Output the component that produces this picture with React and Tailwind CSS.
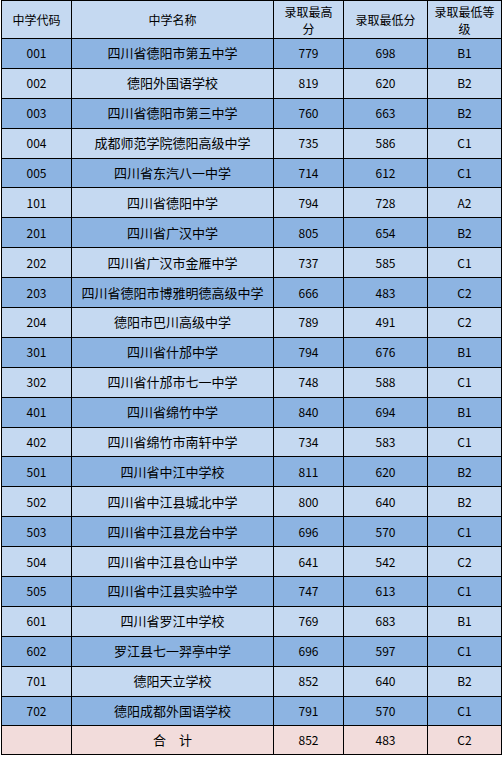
import React from "react";

const rows = [
  ["001", "四川省德阳市第五中学", "779", "698", "B1"],
  ["002", "德阳外国语学校", "819", "620", "B2"],
  ["003", "四川省德阳市第三中学", "760", "663", "B2"],
  ["004", "成都师范学院德阳高级中学", "735", "586", "C1"],
  ["005", "四川省东汽八一中学", "714", "612", "C1"],
  ["101", "四川省德阳中学", "794", "728", "A2"],
  ["201", "四川省广汉中学", "805", "654", "B2"],
  ["202", "四川省广汉市金雁中学", "737", "585", "C1"],
  ["203", "四川省德阳市博雅明德高级中学", "666", "483", "C2"],
  ["204", "德阳市巴川高级中学", "789", "491", "C2"],
  ["301", "四川省什邡中学", "794", "676", "B1"],
  ["302", "四川省什邡市七一中学", "748", "588", "C1"],
  ["401", "四川省绵竹中学", "840", "694", "B1"],
  ["402", "四川省绵竹市南轩中学", "734", "583", "C1"],
  ["501", "四川省中江中学校", "811", "620", "B2"],
  ["502", "四川省中江县城北中学", "800", "640", "B2"],
  ["503", "四川省中江县龙台中学", "696", "570", "C1"],
  ["504", "四川省中江县仓山中学", "641", "542", "C2"],
  ["505", "四川省中江县实验中学", "747", "613", "C1"],
  ["601", "四川省罗江中学校", "769", "683", "B1"],
  ["602", "罗江县七一羿亭中学", "696", "597", "C1"],
  ["701", "德阳天立学校", "852", "640", "B2"],
  ["702", "德阳成都外国语学校", "791", "570", "C1"],
];

// column widths incl. right border: 70 / 202 / 70 / 84 / 74
const grid = "grid grid-cols-[70px_202px_70px_84px_74px] border-b border-black";
const cell = "flex items-center justify-center text-center border-r border-black";

function Row({ data, bg, h }) {
  return (
    <div className={`${grid} ${bg} ${h} text-[12px]`}>
      <div className={cell}>{data[0]}</div>
      <div className={`${cell} text-[13px] whitespace-nowrap`}>{data[1]}</div>
      <div className={cell}>{data[2]}</div>
      <div className={cell}>{data[3]}</div>
      <div className={cell}>{data[4]}</div>
    </div>
  );
}

function App() {
  return (
    <div className="bg-white w-[503px] h-[758px] pl-px font-['Noto_Sans_CJK_SC',sans-serif] text-black leading-[18px] overflow-hidden">
      <div className="w-[501px] border-t border-l border-black">
        <div className={`${grid} h-[38px] bg-[#c5d9f1] text-[12px] leading-[17px]`}>
          <div className={cell}>中学代码</div>
          <div className={cell}>中学名称</div>
          <div className={cell}>
            录取最高
            <br />分
          </div>
          <div className={cell}>录取最低分</div>
          <div className={cell}>
            录取最低等
            <br />级
          </div>
        </div>
        {rows.map((r, i) => (
          <Row
            key={r[0]}
            data={r}
            h="h-[29.9px]"
            bg={i % 2 === 0 ? "bg-[#8db4e2]" : "bg-[#c5d9f1]"}
          />
        ))}
        <Row data={["", "合　计", "852", "483", "C2"]} h="h-[29px]" bg="bg-[#f2dcdb]" />
      </div>
    </div>
  );
}

export default App;
